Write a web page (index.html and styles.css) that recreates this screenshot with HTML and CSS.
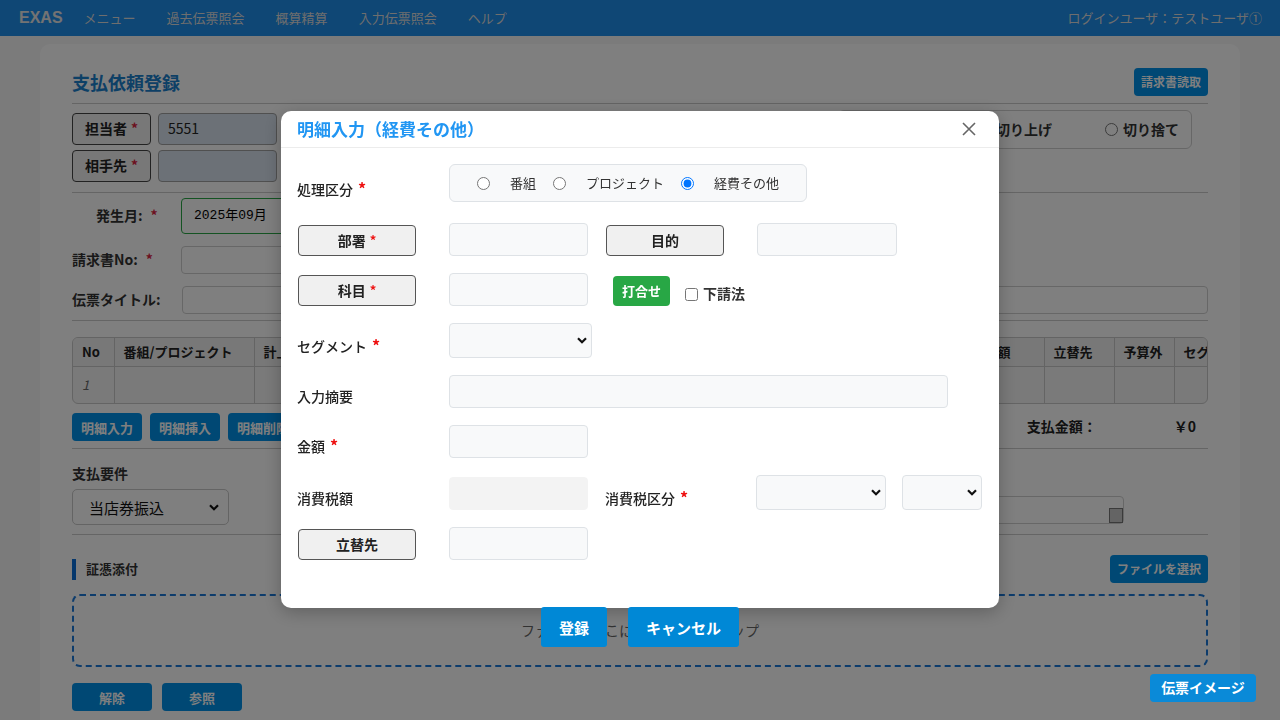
FILE: index.html
```html
<!DOCTYPE html>
<html lang="ja">
<head>
<meta charset="utf-8">
<title>支払依頼登録</title>
<link rel="stylesheet" href="styles.css">
</head>
<body>
<header class="nav">
  <span class="brand">EXAS</span>
  <nav class="menu"><span>メニュー</span><span>過去伝票照会</span><span>概算精算</span><span>入力伝票照会</span><span>ヘルプ</span></nav>
  <span class="user">ログインユーザ：テストユーザ①</span>
</header>

<main class="page">
  <section class="card">
    <div class="card-head">
      <h1>支払依頼登録</h1>
      <span class="btn-dark small">請求書読取</span>
    </div>

    <div class="party">
      <div class="party-grid">
        <span class="lbl-btn">担当者<i>*</i></span><span class="ro">5551</span>
        <span class="lbl-btn">相手先<i>*</i></span><span class="ro"></span>
      </div>
      <div class="round-box">
        <span class="ropt"><span class="circ"></span>四捨五入</span>
        <span class="ropt"><span class="circ"></span>切り上げ</span>
        <span class="ropt"><span class="circ"></span>切り捨て</span>
      </div>
    </div>

    <div class="fields">
      <div class="frow"><span class="flbl indent">発生月:<i>*</i></span><span class="month">2025年09月</span></div>
      <div class="frow"><span class="flbl">請求書No:<i>*</i></span><span class="txt w250"></span></div>
      <div class="frow"><span class="flbl">伝票タイトル:</span><span class="txt grow"></span></div>
    </div>

    <div class="tbl-wrap">
      <table class="dt">
        <thead>
          <tr>
            <th class="c-no">No</th><th class="c-pj">番組/プロジェクト</th><th class="c-a">計上部署</th><th class="c-a">科目</th><th class="c-a">目的</th><th class="c-b">摘要</th><th class="c-amt">金額</th><th class="c-tt">立替先</th><th class="c-yo">予算外</th><th class="c-sg">セグメント</th>
          </tr>
        </thead>
        <tbody>
          <tr><td class="num">1</td><td></td><td></td><td></td><td></td><td></td><td></td><td></td><td></td><td></td></tr>
        </tbody>
      </table>
    </div>

    <div class="detail-bar">
      <span class="btn-dark">明細入力</span>
      <span class="btn-dark">明細挿入</span>
      <span class="btn-dark">明細削除</span>
      <span class="total-lbl">支払金額：</span>
      <span class="total-val">￥0</span>
    </div>

    <div class="pay">
      <div class="pay-left">
        <div class="pay-lbl">支払要件</div>
        <div class="pay-select"><span>当店券振込</span>
          <svg class="chev" width="10" height="7" viewBox="0 0 10 7"><path d="M1 1.2 L5 5.2 L9 1.2" fill="none" stroke="#111" stroke-width="2.2"/></svg>
        </div>
      </div>
      <div class="memo"><span class="memo-grip"></span></div>
    </div>

    <div class="evidence">
      <div class="ev-head">
        <span class="ev-bar"></span><span class="ev-title">証憑添付</span>
        <span class="btn-dark small ev-file">ファイルを選択</span>
      </div>
      <div class="dropzone">ファイルをここにドラッグ＆ドロップ</div>
      <div class="ev-btns"><span class="btn-dark w80">解除</span><span class="btn-dark w80">参照</span></div>
    </div>
  </section>
</main>

<div class="overlay"></div>

<div class="modal">
  <div class="modal-head">
    <span class="modal-title">明細入力（経費その他）</span>
    <svg class="close" width="14" height="14" viewBox="0 0 14 14"><path d="M1 1 L13 13 M13 1 L1 13" stroke="#666" stroke-width="1.6" fill="none"/></svg>
  </div>
  <div class="modal-body">
    <div class="mrow r1">
      <span class="mlbl">処理区分<b>*</b></span>
      <div class="radio-box">
        <label class="opt"><input type="radio" name="k">番組</label>
        <label class="opt"><input type="radio" name="k">プロジェクト</label>
        <label class="opt"><input type="radio" name="k" checked>経費その他</label>
      </div>
    </div>
    <div class="mrow r2">
      <span class="mbtn">部署<i>*</i></span>
      <span class="minput"></span>
      <span class="mbtn">目的</span>
      <span class="minput w140"></span>
    </div>
    <div class="mrow r2">
      <span class="mbtn">科目<i>*</i></span>
      <span class="minput"></span>
      <div class="meet">
        <span class="btn-green">打合せ</span>
        <label class="chk"><input type="checkbox">下請法</label>
      </div>
    </div>
    <div class="mrow r4">
      <span class="mlbl">セグメント<b>*</b></span>
      <div class="mselect w143">
        <svg width="10" height="7" viewBox="0 0 10 7"><path d="M1 1.2 L5 5.2 L9 1.2" fill="none" stroke="#111" stroke-width="2.2"/></svg>
      </div>
    </div>
    <div class="mrow r2">
      <span class="mlbl">入力摘要</span>
      <span class="minput wide"></span>
    </div>
    <div class="mrow r2">
      <span class="mlbl">金額<b>*</b></span>
      <span class="minput"></span>
    </div>
    <div class="mrow r4">
      <span class="mlbl">消費税額</span>
      <span class="minput disabled"></span>
      <span class="mlbl">消費税区分<b>*</b></span>
      <div class="tax-sel">
        <div class="mselect w130">
          <svg width="10" height="7" viewBox="0 0 10 7"><path d="M1 1.2 L5 5.2 L9 1.2" fill="none" stroke="#111" stroke-width="2.2"/></svg>
        </div>
        <div class="mselect w80">
          <svg width="10" height="7" viewBox="0 0 10 7"><path d="M1 1.2 L5 5.2 L9 1.2" fill="none" stroke="#111" stroke-width="2.2"/></svg>
        </div>
      </div>
    </div>
    <div class="mrow r2 last">
      <span class="mbtn">立替先</span>
      <span class="minput"></span>
    </div>
  </div>
  <div class="modal-foot">
    <span class="btn-blue">登録</span>
    <span class="btn-blue">キャンセル</span>
  </div>
</div>

<span class="float-btn">伝票イメージ</span>
</body>
</html>
```

FILE: styles.css
```css
* { box-sizing: border-box; margin: 0; padding: 0; }

body {
  margin: 0;
  width: 1280px;
  height: 720px;
  overflow: hidden;
  background: #f6f6f7;
  color: #222;
  font-family: "Noto Sans CJK JP", "Noto Sans", sans-serif;
  font-size: 14px;
  line-height: 1.4;
}

/* ---------- nav ---------- */
.nav {
  height: 36px;
  background: #1e8eea;
  display: flex;
  align-items: center;
  padding: 0 18px 0 19px;
  color: #dcdcdc;
}
.brand {
  font-family: "Liberation Sans", sans-serif;
  font-weight: 700;
  font-size: 16px;
  color: #e6e6e6;
  margin-right: 21px;
}
.menu { display: flex; gap: 31px; font-size: 13px; }
.user { margin-left: auto; font-size: 13px; }

/* ---------- page card ---------- */
.page { padding: 8px 40px 0; }
.card {
  background: #fff;
  border-radius: 10px;
  padding: 0 32px;
  height: 700px;
}
.card-head {
  display: flex;
  align-items: center;
  justify-content: space-between;
  padding: 24px 0 7px;
  border-bottom: 1px solid #cacaca;
}
.card-head h1 {
  font-size: 18px;
  line-height: 28px;
  font-weight: 700;
  color: #1a80cc;
}
.btn-dark {
  display: inline-flex;
  align-items: center;
  justify-content: center;
  height: 28px;
  padding: 0 9px;
  border-radius: 4px;
  background: #0090e8;
  color: #fff;
  font-size: 13px;
  font-weight: 700;
  line-height: 1;
}
.btn-dark.small { font-size: 12px; padding: 0 7px; }
.w80 { width: 80px; }

.party {
  display: flex;
  align-items: flex-start;
  padding: 6px 16px 10px 0;
  border-bottom: 1px solid #cacaca;
}
.party-grid {
  margin-top: 3px;
  display: grid;
  grid-template-columns: 79px 119px;
  column-gap: 7px;
  row-gap: 5px;
}
.lbl-btn {
  height: 32px;
  display: flex;
  align-items: center;
  justify-content: center;
  background: #f0f0f0;
  border: 1px solid #444;
  border-radius: 4px;
  font-weight: 700;
  font-size: 14px;
}
.lbl-btn i, .flbl i {
  font-style: normal;
  color: #d9233f;
  margin-left: 4px;
}
.ro {
  height: 32px;
  background: #d8e2ee;
  border: 1px solid #a0a0a0;
  border-radius: 4px;
  padding: 0 9px;
  display: flex;
  align-items: center;
  font-size: 14px;
}
.round-box {
  margin-left: auto;
  height: 39px;
  display: flex;
  align-items: center;
  gap: 53px;
  padding: 0 12px;
  border: 1px solid #cfcfcf;
  border-radius: 6px;
  font-weight: 700;
  color: #333;
}
.ropt { display: flex; align-items: center; }
.circ {
  width: 13px; height: 13px;
  border: 1px solid #777;
  border-radius: 50%;
  margin-right: 5px;
  background: #fff;
}

.fields {
  padding: 5px 0 6px;
  border-bottom: 1px solid #cacaca;
}
.frow { display: flex; align-items: center; margin-bottom: 12px; }
.frow:last-child { margin-bottom: 0; }
.flbl {
  width: 109px;
  font-weight: 700;
  font-size: 14px;
  color: #333;
  flex: none;
}
.flbl.indent { padding-left: 24px; }
.flbl i { margin-left: 8px; }
.month {
  width: 250px;
  height: 36px;
  border: 1px solid #28a745;
  border-radius: 4px;
  padding: 0 12px;
  display: flex;
  align-items: center;
  font-family: "Liberation Mono", "Noto Sans CJK JP", monospace;
  font-size: 13px;
  color: #000;
}
.txt {
  height: 28px;
  border: 1px solid #cfcfcf;
  border-radius: 4px;
}
.w250 { width: 250px; }
.grow { flex: 1; margin-left: 1px; }

/* table */
.tbl-wrap {
  margin-top: 16px;
  border: 1px solid #c8c8c8;
  border-radius: 6px;
  overflow: hidden;
  background: #f4f4f4;
}
.dt {
  border-collapse: collapse;
  table-layout: fixed;
  width: 1191px;
}
.dt th, .dt td {
  border: 1px solid #c8c8c8;
  text-align: left;
  padding: 0 9px;
  white-space: nowrap;
  overflow: hidden;
}
.dt tr > *:first-child { border-left: none; }
.dt thead tr > * { border-top: none; }
.dt tbody tr > * { border-bottom: none; }
.dt th {
  height: 28px;
  font-size: 13px;
  line-height: 18px;
  font-weight: 700;
  background: #f1f1f1;
}
.dt td { height: 37px; line-height: 18px; }
.dt td.num { font-style: italic; color: #666; font-size: 13px; }
.c-no { width: 41px; }
.c-pj { width: 140px; }
.c-a { width: 140px; }
.c-b { width: 301px; }
.c-amt { width: 69px; }
.c-tt { width: 70px; }
.c-yo { width: 60px; }
.c-sg { width: 90px; }

.detail-bar {
  margin-top: 9px;
  display: flex;
  align-items: center;
  gap: 8px;
  padding-bottom: 7px;
  border-bottom: 1px solid #cacaca;
}
.total-lbl { margin-left: auto; font-weight: 700; font-size: 14px; }
.total-val { margin-left: 69px; margin-right: 12px; font-weight: 700; font-size: 14px; }

.pay {
  display: flex;
  align-items: flex-end;
  padding: 14px 0 9px;
  border-bottom: 1px solid #cacaca;
}
.pay-lbl { font-weight: 700; font-size: 14px; line-height: 20px; color: #333; }
.pay-select {
  margin-top: 6px;
  width: 157px;
  height: 36px;
  border: 1px solid #c8c8c8;
  border-radius: 5px;
  display: flex;
  align-items: center;
  justify-content: space-between;
  padding: 0 9px 0 16px;
  font-size: 15px;
  color: #111;
}
.memo {
  margin-left: auto;
  margin-right: 84px;
  margin-bottom: 1px;
  width: 420px;
  height: 28px;
  border: 1px solid #cfcfcf;
  border-radius: 4px;
  display: flex;
  justify-content: flex-end;
  align-items: flex-end;
}
.memo-grip {
  width: 14px;
  height: 15px;
  background: #c8c8c8;
  border: 1px solid #777;
}

.evidence { padding-top: 20px; }
.ev-head { display: flex; align-items: center; height: 28px; }
.ev-bar { width: 4px; height: 21px; background: #0a6fd8; }
.ev-title { margin-left: 10px; font-weight: 700; font-size: 13px; color: #333; }
.ev-file { margin-left: auto; }
.dropzone {
  margin-top: 11px;
  height: 73px;
  border: 2px dashed #1a78d8;
  border-radius: 8px;
  display: flex;
  align-items: center;
  justify-content: center;
  font-size: 14px;
  color: #666;
}
.ev-btns { margin-top: 16px; display: flex; gap: 10px; }

/* ---------- overlay + modal ---------- */
.overlay {
  position: fixed;
  inset: 0;
  background: rgba(0, 0, 0, 0.5);
  z-index: 10;
}
.modal {
  position: fixed;
  left: 281px;
  top: 111px;
  width: 718px;
  background: #fff;
  border-radius: 10px;
  box-shadow: 0 4px 18px rgba(0, 0, 0, 0.25);
  z-index: 20;
}
.modal-head {
  height: 37px;
  display: flex;
  align-items: center;
  justify-content: space-between;
  padding: 0 23px 1px 16px;
  border-bottom: 1px solid #ececec;
}
.modal-title {
  font-size: 17px;
  font-weight: 700;
  color: #2196f3;
  line-height: 22px;
}
.modal-body { padding: 16px 16px 48px; }
.mrow {
  display: grid;
  grid-template-columns: 152px 156px 152px 1fr;
  align-items: end;
  margin-bottom: 17px;
}
.mrow.r1 { height: 38px; margin-bottom: 21px; }
.mrow.r2 { height: 33px; }
.mrow.r4 { height: 35px; }
.mrow.last { margin-bottom: 0; }

.mlbl {
  font-size: 14px;
  line-height: 24px;
  color: #222;
  font-weight: 500;
}
.mlbl b {
  color: #ee1111;
  font-size: 16px;
  margin-left: 5px;
}
.r1 .mlbl { line-height: 26px; }

.radio-box {
  grid-column: 2 / 5;
  width: 358px;
  height: 38px;
  background: #f8f9fa;
  border: 1px solid #dee2e6;
  border-radius: 6px;
  display: flex;
  align-items: center;
  padding-left: 27px;
  gap: 17px;
}
.opt {
  display: flex;
  align-items: center;
  gap: 20px;
  font-size: 13px;
  color: #333;
}
.opt input { margin: 0; width: 13px; height: 13px; }

.mbtn {
  width: 118px;
  height: 31px;
  margin-left: 1px;
  background: #f0f0f0;
  border: 1px solid #555;
  border-radius: 4px;
  display: flex;
  align-items: center;
  justify-content: center;
  font-weight: 700;
  font-size: 14px;
  color: #222;
}
.mbtn i { font-style: normal; color: #ee1111; font-size: 13px; margin-left: 4px; }

.minput {
  width: 139px;
  height: 33px;
  background: #f8f9fa;
  border: 1px solid #dee2e6;
  border-radius: 4px;
}
.minput.w140 { width: 140px; }
.minput.wide { grid-column: 2 / 5; width: 499px; }
.minput.disabled { background: #f3f3f3; border-color: #f3f3f3; }

.meet {
  grid-column: 3 / 5;
  display: flex;
  align-items: flex-end;
  padding-left: 8px;
  gap: 15px;
}
.btn-green {
  height: 30px;
  padding: 0 9px;
  background: #28a745;
  color: #fff;
  font-weight: 700;
  font-size: 13px;
  border-radius: 4px;
  display: flex;
  align-items: center;
}
.chk {
  display: flex;
  align-items: center;
  gap: 5px;
  height: 24px;
  font-weight: 700;
  font-size: 14px;
  color: #333;
}
.chk input { margin: 0; width: 13px; height: 13px; }

.mselect {
  height: 35px;
  background: #f8f9fa;
  border: 1px solid #dee2e6;
  border-radius: 4px;
  display: flex;
  align-items: center;
  justify-content: flex-end;
  padding-right: 4px;
}
.w143 { width: 143px; }
.w130 { width: 130px; }
.w80 { width: 80px; }
.tax-sel { display: flex; gap: 16px; margin-left: -1px; }

.close { display: block; }

.modal-foot {
  position: absolute;
  left: 0;
  right: 0;
  top: calc(100% - 1px);
  display: flex;
  justify-content: center;
  gap: 21px;
}
.btn-blue {
  height: 40px;
  padding: 0 18px;
  background: #0088d6;
  color: #fff;
  font-weight: 700;
  font-size: 15px;
  border-radius: 3px;
  display: flex;
  align-items: center;
}

.float-btn {
  position: fixed;
  right: 24px;
  bottom: 18px;
  width: 106px;
  height: 28px;
  background: #0a8ad8;
  color: #fff;
  font-weight: 700;
  font-size: 14px;
  border-radius: 4px;
  display: flex;
  align-items: center;
  justify-content: center;
  z-index: 30;
}
```
